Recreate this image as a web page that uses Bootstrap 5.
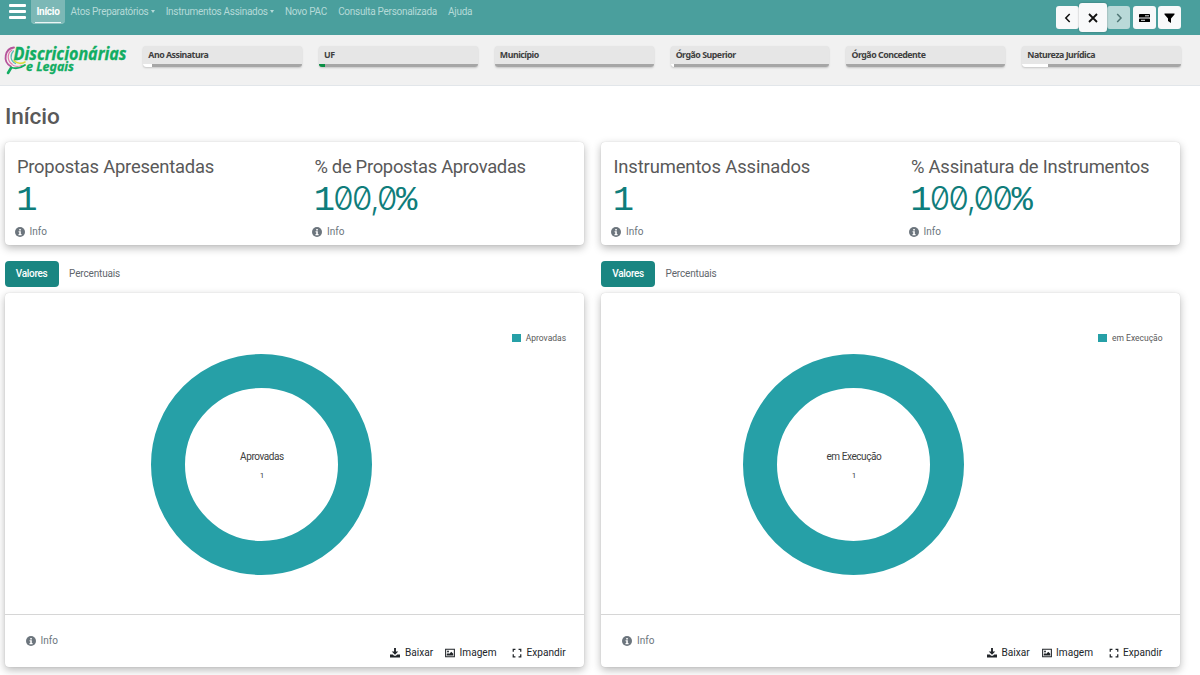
<!DOCTYPE html>
<html lang="pt-BR">
<head>
<meta charset="utf-8">
<meta name="viewport" content="width=device-width, initial-scale=1">
<title>Discricionárias e Legais</title>
<link href="https://cdn.jsdelivr.net/npm/bootstrap@5.3.0/dist/css/bootstrap.min.css" rel="stylesheet">
<style>
body{font-family:Roboto,"Liberation Sans",sans-serif;font-size:10px;line-height:1.2;color:#595959;background:#fff;height:675px;overflow:hidden}
svg{display:block;flex:none}
.topbar{height:35px;background:#4a9f9d}
.burger{width:17px;margin:4px 5px 0 9px}
.burger i{display:block;height:3px;border-radius:1px;background:#fff;margin-bottom:3px}
.topnav .nav-link{padding:6px 5.6px 0;color:#b5dad8;font-size:10px;line-height:12px;letter-spacing:-.29px;white-space:nowrap}
.topnav .nav-link.active{position:relative;height:24px;width:34px;padding:6px 0 0;text-align:center;color:#fff;font-weight:700;background:#7cb8b6;border-radius:0 0 4px 4px;border-bottom:1px solid #8fc3c1}
.topnav .nav-link.active::after{content:"";position:absolute;left:4px;right:4px;bottom:0;height:1px;background:#eaf5f4}
.topnav .dropdown-toggle::after{border-top:3px solid;border-left:2.5px solid transparent;border-right:2.5px solid transparent;border-bottom:0;margin-left:2px;vertical-align:2px}
.tool{width:23px;height:23px;border-radius:3px;background:#f8f9fa;color:#111;padding:0;border:0}
.tool.dim{background:#b9d9d8;color:#4e7473}
.tool.big{width:28px;height:29px;box-shadow:0 0 2px rgba(0,0,0,.35);z-index:1}
.filters{height:51px;background:#f1f1f1;border-bottom:1px solid #e2e6ea;padding-left:3px}
.logo{margin:6px 10.3px 0 0}
.fgrid{display:grid;grid-template-columns:repeat(6,158.7px);column-gap:17.1px;margin-top:11px}
.fbox{height:21px;background:#e6e6e6;border-radius:3px;box-shadow:0 1px 2px rgba(0,0,0,.18);overflow:hidden;font:700 8.8px/19px "Noto Sans",sans-serif;letter-spacing:-.48px;color:#404040}
.fbox span{height:18px;padding-left:5px;display:block;white-space:nowrap}
.fbar{height:3px;background:#a6a6a6}
.fbar div{height:3px;background:#fff}
.fbar .ok{background:#0a8f45}
h1{font-size:22.6px;font-weight:500;line-height:28px;margin:17px 0 11px;color:#595959;letter-spacing:-.1px}
.cols{display:grid;grid-template-columns:579px 579px;column-gap:17.5px;padding-left:4.6px}
.panel{background:#fff;border-radius:4px;box-shadow:0 3px 8px rgba(0,0,0,.28),0 0 1px rgba(0,0,0,.2)}
.kpis{height:103px;padding:14px 0 0 10px}
.kpi{width:297.500px;flex:none}
.ktitle{font:400 18.4px/22px Roboto,sans-serif;color:#595959;padding-left:2.300px;white-space:nowrap}
.k1{letter-spacing:-.22px}.k2{letter-spacing:-.3px}.k3{letter-spacing:-.12px}.k4{letter-spacing:-.19px}
.knum{font:400 35.500px/42px "Liberation Mono",monospace;color:#0f7d7b;padding-left:1.600px;height:46px;margin-top:2px;letter-spacing:-1.800px;white-space:nowrap}
.knum b{font:300 33px/1 Inter,sans-serif;line-height:0;font-feature-settings:"zero";letter-spacing:-1.500px}
.info{gap:5px;color:#6c757d;line-height:12px}
.tabs{height:26px;margin:16px 0 6px}
.tabs .nav-link{padding:0 10.500px;height:26px;line-height:25px;color:#5f666c;font-size:10px;letter-spacing:-.16px}
.tabs .nav-link.active{background:#1a8682;color:#fff;border-radius:4px;width:54px;padding:0;text-align:center;font-weight:500;letter-spacing:-.3px}
.chart{height:374px}
.plot{height:321px;position:relative}
.legend{position:absolute;right:17.500px;top:39px;gap:5px;font:400 8.500px/12px Roboto,sans-serif;color:#595959}
.legend i{width:8.500px;height:8.500px;background:#26a0a7}
.donut{position:absolute;top:61.400px;width:221px;height:221px;border:34.500px solid #26a0a7;border-radius:50%;text-align:center;color:#404040;padding-top:62.500px}
.dlabel{font-size:10px;line-height:12px;letter-spacing:-.42px;white-space:nowrap}
.dval{font-size:8px;line-height:12px;margin-top:7px}
.foot{height:53px;border-top:1px solid #d6d6d6;padding:20px 18px 0 21px}
.acts{color:#212529;margin-top:12px;gap:12px;font-size:10.100px;line-height:12px}
.acts span{gap:4.500px}
.acts span:last-child{margin-left:3.500px}
</style>
</head>
<body>
<svg width="0" height="0" class="position-absolute">
<symbol id="i-info" viewBox="0 0 16 16"><path fill="currentColor" d="M8 16A8 8 0 1 0 8 0a8 8 0 0 0 0 16z"/><path fill="#fff" d="M6.8 3h2.5v2.4H6.8zM5.7 6.8h3.6v4.4h1.2V13H5.6v-1.8h1.2V8.5H5.7z"/></symbol>
<symbol id="i-down" viewBox="0 0 16 16"><path fill="currentColor" d="M6.5 0h3v5.500h3.700L8 10.800 2.800 5.500h3.700zM0 10.500h4.500l2 2h3l2-2H16V15H0z"/></symbol>
<symbol id="i-img" viewBox="0 0 16 16"><path fill="none" stroke="currentColor" stroke-width="1.700" d="M1 2h14v12H1z"/><circle cx="4.800" cy="5.500" r="1.500" fill="currentColor"/><path fill="currentColor" d="M2.800 12v-2l2-2 1.700 1.600L10 5.800l3.200 3.200v3z"/></symbol>
<symbol id="i-exp" viewBox="0 0 16 16"><path fill="none" stroke="currentColor" stroke-width="2" d="M2 6V2h3.500M10.500 2H14v4M14 10v4h-3.500M5.500 14H2v-4"/></symbol>
</svg>

<header class="topbar d-flex align-items-start">
  <div class="burger"><i></i><i></i><i></i></div>
  <nav class="nav topnav flex-nowrap">
    <a class="nav-link active">Início</a>
    <a class="nav-link dropdown-toggle">Atos Preparatórios</a>
    <a class="nav-link dropdown-toggle">Instrumentos Assinados</a>
    <a class="nav-link">Novo PAC</a>
    <a class="nav-link">Consulta Personalizada</a>
    <a class="nav-link">Ajuda</a>
  </nav>
  <div class="d-flex align-items-center ms-auto" style="margin:3px 19px 0 0">
    <button class="tool btn d-flex align-items-center justify-content-center"><svg width="12" height="12" viewBox="0 0 12 12" fill="none" stroke="currentColor" stroke-width="1.500"><path d="M7.700 2 3.800 6l3.900 4"/></svg></button>
    <button class="tool big btn d-flex align-items-center justify-content-center"><svg width="12" height="12" viewBox="0 0 12 12" fill="none" stroke="currentColor" stroke-width="1.800"><path d="m2 2 8 8M10 2 2 10"/></svg></button>
    <button class="tool dim btn d-flex align-items-center justify-content-center"><svg width="12" height="12" viewBox="0 0 12 12" fill="none" stroke="currentColor" stroke-width="1.500"><path d="M4.200 2 8 6l-3.800 4"/></svg></button>
    <button class="tool btn d-flex align-items-center justify-content-center" style="margin-left:2.500px"><svg width="11" height="10" viewBox="0 0 11 10"><rect y="1" width="11" height="3.600" rx=".7"/><rect y="5.500" width="11" height="3.600" rx=".7"/><path stroke="#fff" stroke-width=".9" d="M6 2.800h4M2 7.300h4"/></svg></button>
    <button class="tool btn d-flex align-items-center justify-content-center" style="margin-left:2.500px"><svg width="11" height="10" viewBox="0 0 11 10"><path d="M.5.5h10v1L7 5.500V10L4 8V5.500L.5 1.500z"/></svg></button>
  </div>
</header>

<section class="filters d-flex align-items-start">
  <svg class="logo" width="130" height="38" viewBox="3 41 130 38">
    <g fill="none" stroke-linecap="round">
      <path stroke="#b5539b" stroke-width="1.800" d="M14 47.500c-9 1-12 14-3 19"/>
      <path stroke="#e27aa8" stroke-width="1.200" d="M12 50c-5 3-5 11 0 14"/>
      <path stroke="#5cbcb5" stroke-width="1.200" d="M13.500 51c-4 4-3 10 2 12.500"/>
      <path stroke="#d9dc3d" stroke-width="1.600" d="M14 60.500c3 3.500 8 3.500 11 1.500"/>
      <path stroke="#e27aa8" stroke-width="1" d="M12 64.500c3 2.500 7 2.500 10 .8"/>
      <path stroke="#12ad62" stroke-width="1.800" d="M25 65c-4 3-9 4-14 2.500"/>
      <path stroke="#12ad62" stroke-width="2.600" d="M11 68 8 73"/>
    </g>
    <g fill="#12ad62" stroke="#12ad62" stroke-width=".3" font-family="Noto Sans,Open Sans,sans-serif" font-weight="700" font-style="italic">
      <text x="13.500" y="60" font-size="17.500" textLength="113" lengthAdjust="spacingAndGlyphs">Discricionárias</text>
      <text x="26" y="71" font-size="13" textLength="48" lengthAdjust="spacingAndGlyphs">e Legais</text>
    </g>
  </svg>
  <div class="fgrid">
    <div class="fbox"><span>Ano Assinatura</span><div class="fbar"><div style="width:5.500%"></div></div></div>
    <div class="fbox"><span>UF</span><div class="fbar"><div class="ok" style="width:3.500%"></div></div></div>
    <div class="fbox"><span>Município</span><div class="fbar"></div></div>
    <div class="fbox"><span>Órgão Superior</span><div class="fbar"><div style="width:2%"></div></div></div>
    <div class="fbox"><span>Órgão Concedente</span><div class="fbar"></div></div>
    <div class="fbox"><span>Natureza Jurídica</span><div class="fbar"><div style="width:16.500%"></div></div></div>
  </div>
</section>

<main>
  <h1 style="padding-left:5px">Início</h1>
  <div class="cols">
    <section>
      <div class="panel kpis d-flex">
        <div class="kpi"><div class="ktitle k1">Propostas Apresentadas</div><div class="knum">1</div><div class="info d-flex align-items-center"><svg width="10" height="10"><use href="#i-info"/></svg>Info</div></div>
        <div class="kpi"><div class="ktitle k2">% de Propostas Aprovadas</div><div class="knum">1<b>00,0</b>%</div><div class="info d-flex align-items-center"><svg width="10" height="10"><use href="#i-info"/></svg>Info</div></div>
      </div>
      <nav class="nav tabs"><a class="nav-link active">Valores</a><a class="nav-link">Percentuais</a></nav>
      <div class="panel chart">
        <div class="plot">
          <div class="legend d-flex align-items-center"><i></i>Aprovadas</div>
          <div class="donut" style="left:146.900px"><div class="dlabel">Aprovadas</div><div class="dval">1</div></div>
        </div>
        <div class="foot d-flex justify-content-between align-items-start">
          <div class="info d-flex align-items-center"><svg width="10" height="10"><use href="#i-info"/></svg>Info</div>
          <div class="acts d-flex"><span class="d-flex align-items-center"><svg width="10" height="10"><use href="#i-down"/></svg>Baixar</span><span class="d-flex align-items-center"><svg width="10" height="10"><use href="#i-img"/></svg>Imagem</span><span class="d-flex align-items-center"><svg width="10" height="10"><use href="#i-exp"/></svg>Expandir</span></div>
        </div>
      </div>
    </section>
    <section>
      <div class="panel kpis d-flex">
        <div class="kpi"><div class="ktitle k3">Instrumentos Assinados</div><div class="knum">1</div><div class="info d-flex align-items-center"><svg width="10" height="10"><use href="#i-info"/></svg>Info</div></div>
        <div class="kpi"><div class="ktitle k4">% Assinatura de Instrumentos</div><div class="knum">1<b>00,00</b>%</div><div class="info d-flex align-items-center"><svg width="10" height="10"><use href="#i-info"/></svg>Info</div></div>
      </div>
      <nav class="nav tabs"><a class="nav-link active">Valores</a><a class="nav-link">Percentuais</a></nav>
      <div class="panel chart">
        <div class="plot">
          <div class="legend d-flex align-items-center"><i></i>em Execução</div>
          <div class="donut" style="left:142.300px"><div class="dlabel">em Execução</div><div class="dval">1</div></div>
        </div>
        <div class="foot d-flex justify-content-between align-items-start">
          <div class="info d-flex align-items-center"><svg width="10" height="10"><use href="#i-info"/></svg>Info</div>
          <div class="acts d-flex"><span class="d-flex align-items-center"><svg width="10" height="10"><use href="#i-down"/></svg>Baixar</span><span class="d-flex align-items-center"><svg width="10" height="10"><use href="#i-img"/></svg>Imagem</span><span class="d-flex align-items-center"><svg width="10" height="10"><use href="#i-exp"/></svg>Expandir</span></div>
        </div>
      </div>
    </section>
  </div>
</main>
<script src="https://cdn.jsdelivr.net/npm/bootstrap@5.3.0/dist/js/bootstrap.bundle.min.js"></script>
</body>
</html>
